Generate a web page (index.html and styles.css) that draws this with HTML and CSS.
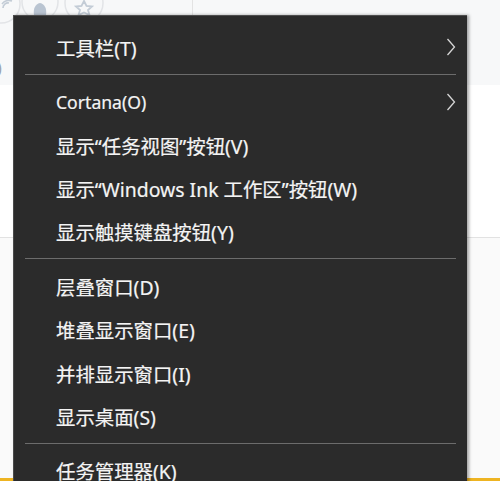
FILE: index.html
```html
<!DOCTYPE html>
<html lang="zh-CN">
<head>
<meta charset="utf-8">
<title>任务栏菜单</title>
<link rel="stylesheet" href="styles.css">
</head>
<body>
<div class="bg">
  <div class="bg-top">
    <svg class="bg-icons" width="190" height="30" viewBox="0 0 190 30">
      <circle cx="1" cy="4" r="19" fill="none" stroke="#e2e4e7" stroke-width="1.5"/>
      <path d="M3 8 a5 5 0 0 1 6 -5 M2 4 a9 9 0 0 1 10 -3" fill="none" stroke="#c3ccd6" stroke-width="1.6"/>
      <circle cx="40" cy="2" r="18" fill="none" stroke="#e2e4e7" stroke-width="1.5"/>
      <path d="M34 15 C33 9 35 4 40 3 C45 4 47 9 46 15 Z" fill="#b9c4d1"/>
      <circle cx="84" cy="3" r="19" fill="none" stroke="#e2e4e7" stroke-width="1.5"/>
      <path d="M84 1 L86.5 6 L92 6.5 L88 10 L89.5 15 L84 12.5 L78.5 15 L80 10 L76 6.5 L81.5 6 Z" fill="none" stroke="#c3ccd6" stroke-width="1.8"/>
    </svg>
    <div class="bg-vline"></div>
    <span class="bg-paren">)</span>
  </div>
  <div class="bg-mid"></div>
  <div class="bg-rest"></div>
  <div class="bg-bar"></div>
</div>

<div class="menu">
  <div class="item"><span>工具栏(T)</span><svg class="chev" width="10" height="18" viewBox="0 0 10 18"><path d="M1.5 1 L8.5 9 L1.5 17" fill="none" stroke="#d6d6d6" stroke-width="1.3"/></svg></div>
  <div class="sep"></div>
  <div class="item"><span><span class="en">Cortana(O)</span></span><svg class="chev" width="10" height="18" viewBox="0 0 10 18"><path d="M1.5 1 L8.5 9 L1.5 17" fill="none" stroke="#d6d6d6" stroke-width="1.3"/></svg></div>
  <div class="item"><span>显示“任务视图”按钮(V)</span></div>
  <div class="item"><span>显示“Windows Ink 工作区”按钮(W)</span></div>
  <div class="item"><span>显示触摸键盘按钮(Y)</span></div>
  <div class="sep"></div>
  <div class="item"><span>层叠窗口(D)</span></div>
  <div class="item"><span>堆叠显示窗口(E)</span></div>
  <div class="item"><span>并排显示窗口(I)</span></div>
  <div class="item"><span>显示桌面(S)</span></div>
  <div class="sep"></div>
  <div class="item"><span>任务管理器(K)</span></div>
</div>
</body>
</html>
```
FILE: styles.css
```css
html, body {
  margin: 0;
  padding: 0;
}
body {
  width: 500px;
  height: 481px;
  overflow: hidden;
  position: relative;
  background: #ffffff;
  font-family: "Noto Sans", "Noto Sans CJK SC", sans-serif;
}
.bg {
  display: flex;
  flex-direction: column;
  height: 481px;
}
.bg-top {
  height: 85px;
  background: #f7f8f9;
  display: flex;
  align-items: flex-start;
  position: relative;
}
.bg-icons {
  display: block;
  flex: none;
}
.bg-vline {
  width: 1px;
  height: 16px;
  background: #e3e3e3;
  margin-left: 2px;
}
.bg-paren {
  position: absolute;
  left: -3px;
  top: 57px;
  font-size: 16px;
  color: #9aa3ad;
}
.bg-mid {
  height: 152px;
  background: #ffffff;
  border-bottom: 1px solid #e2e2e2;
}
.bg-rest {
  flex: 1;
  background: #fafafa;
}
.bg-bar {
  height: 3px;
  background: #eeb422;
}
.menu {
  position: absolute;
  left: 13px;
  top: 15px;
  width: 454px;
  height: 480px;
  background: #2b2b2b;
  border-top: 1px solid #4e4e4e;
  border-left: 1px solid #4a4a4a;
  padding-top: 9.5px;
  box-sizing: border-box;
  box-shadow: 2px 0 3px rgba(0, 0, 0, 0.35);
}
.item {
  height: 43.3px;
  display: flex;
  align-items: center;
  padding-left: 42px;
  padding-right: 11px;
  color: #f4f4f4;
  font-size: 19.4px;
  white-space: nowrap;
  -webkit-text-stroke: 0.2px #f4f4f4;
}
.en {
  font-size: 17.6px;
}
.chev {
  margin-left: auto;
  display: block;
}
.sep {
  height: 11.4px;
  box-sizing: border-box;
  padding-top: 5px;
  margin: 0 11px 0 11px;
}
.sep::before {
  content: "";
  display: block;
  height: 1px;
  background: #6c6c6c;
}
```
